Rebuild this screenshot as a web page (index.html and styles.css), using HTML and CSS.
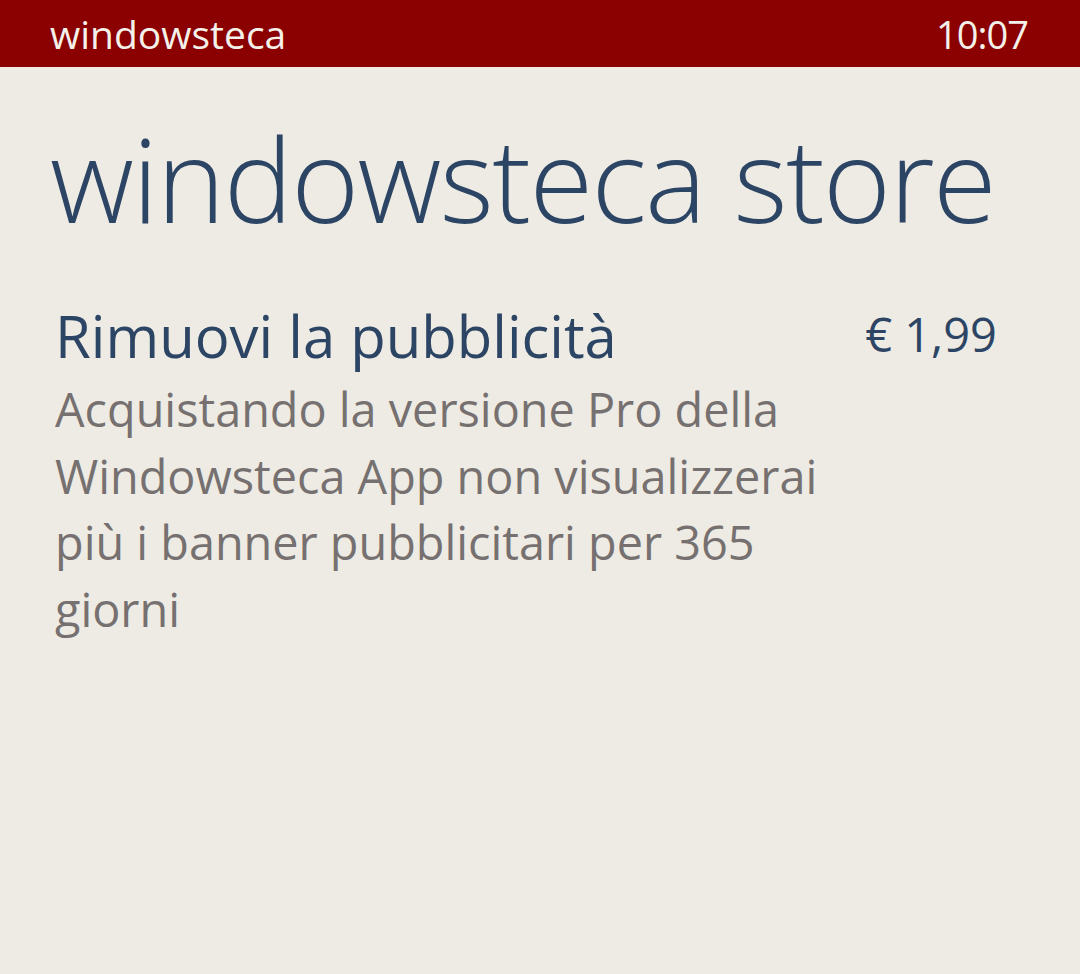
FILE: index.html
```html
<!DOCTYPE html>
<html lang="it">
<head>
<meta charset="utf-8">
<title>windowsteca store</title>
<link rel="stylesheet" href="styles.css">
</head>
<body>
<header class="statusbar">
  <span class="app-name">windowsteca</span>
  <span class="clock">10:07</span>
</header>
<main class="page">
  <h1 class="page-title">windowsteca store</h1>
  <section class="product">
    <div class="product-info">
      <h2 class="product-name">Rimuovi la pubblicità</h2>
      <p class="product-desc">Acquistando la versione Pro della Windowsteca App non visualizzerai più i banner pubblicitari per 365 giorni</p>
    </div>
    <div class="product-price">€ 1,99</div>
  </section>
</main>
</body>
</html>
```
FILE: styles.css
```css
* { box-sizing: border-box; }
html, body { margin: 0; padding: 0; }
body {
  width: 1080px;
  height: 974px;
  background: #edebe3;
  font-family: "Open Sans", "Noto Sans", sans-serif;
  overflow: hidden;
}
.statusbar {
  height: 67px;
  background: #8b0000;
  color: #f4f0ea;
  display: flex;
  justify-content: space-between;
  align-items: center;
  padding: 0 52px 0 50px;
  font-size: 39px;
  font-weight: 400;
}
.clock {
  font-size: 38px;
  letter-spacing: -1px;
}
.page { padding: 0 0 0 50px; }
.page-title {
  margin: 0;
  padding-top: 36px;
  font-size: 116px;
  font-weight: 300;
  line-height: 150px;
  color: #2d4564;
  letter-spacing: -1.6px;
}
.product {
  display: flex;
  align-items: flex-start;
  padding: 47px 83px 0 5px;
}
.product-info { width: 790px; }
.product-name {
  margin: 0;
  font-size: 58px;
  font-weight: 400;
  line-height: 72px;
  color: #2d4564;
}
.product-price {
  margin-left: auto;
  margin-top: 2px;
  font-size: 47px;
  line-height: 64px;
  color: #2d4564;
}
.product-desc {
  margin: 4px 0 0;
  font-size: 46.8px;
  line-height: 66.5px;
  color: #767070;
}
```
